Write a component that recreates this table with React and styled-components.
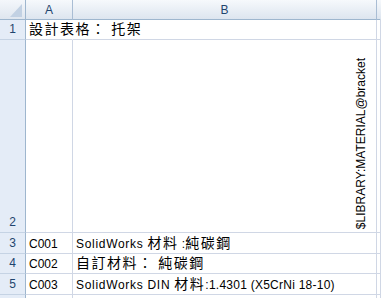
import React from "react";
import styled, { createGlobalStyle } from "styled-components";

const GlobalStyle = createGlobalStyle`
  html, body {
    margin: 0;
    padding: 0;
    background: #ffffff;
    overflow: hidden;
  }
`;

const Sheet = styled.div`
  width: 381px;
  height: 298px;
  overflow: hidden;
  display: grid;
  grid-template-columns: 26px 47px 304px 1fr;
  grid-template-rows: 20px 20px 193px 21px 20px 21px 1fr;
  font-family: "Liberation Sans", Arial, sans-serif;
  font-size: 12px;
  color: #000;
  background: #fff;
`;

const Corner = styled.div`
  position: relative;
  box-sizing: border-box;
  background: linear-gradient(#f4f7fb, #dfe6ef);
  border-right: 1px solid #9eb6ce;
  border-bottom: 1px solid #9eb6ce;

  &::after {
    content: "";
    position: absolute;
    right: 3px;
    bottom: 2px;
    width: 12px;
    height: 13px;
    background: #c2d1e3;
    clip-path: polygon(100% 0, 100% 100%, 0 100%);
  }
`;

const ColHead = styled.div`
  box-sizing: border-box;
  display: flex;
  align-items: center;
  justify-content: center;
  background: linear-gradient(#f6f9fc, #dde5ef);
  border-right: 1px solid ${(p) => (p.$last ? "transparent" : "#a9bdd4")};
  border-bottom: 1px solid #9eb6ce;
  color: #1f456e;
  font-size: 12px;
  padding-top: 1px;
`;

const RowHead = styled.div`
  box-sizing: border-box;
  display: flex;
  align-items: flex-end;
  justify-content: center;
  padding-bottom: 3px;
  background: #e4ecf7;
  border-right: 1px solid #9eb6ce;
  border-bottom: 1px solid #c5d3e4;
  color: #1f456e;
  font-size: 12px;
  line-height: 14px;
`;

const Cell = styled.div`
  position: relative;
  z-index: ${(p) => (p.$spill ? 1 : 0)};
  box-sizing: border-box;
  min-height: 0;
  display: flex;
  align-items: flex-end;
  justify-content: ${(p) => (p.$right ? "flex-end" : "flex-start")};
  padding: ${(p) => (p.$right ? "0 8px 3px 0" : "0 0 1px 3px")};
  border-right: 1px solid ${(p) => (p.$spill ? "transparent" : "#d0d7e5")};
  border-bottom: 1px solid #d0d7e5;
  line-height: 15px;
  white-space: nowrap;
  overflow: visible;
`;

const Value = styled.span`
  display: block;
  white-space: pre;
  line-height: 15px;
`;

const Latin = styled.span`
  letter-spacing: ${(p) => p.$spacing || 0}px;
`;

const Han = styled.span`
  font-family: "Noto Sans CJK TC", "Noto Sans CJK SC", sans-serif;
  font-size: 14px;
  line-height: 15px;
  letter-spacing: 1.5px;
`;

const Rotated = styled.span`
  writing-mode: vertical-rl;
  transform: rotate(180deg);
  line-height: 14px;
`;

export default function App() {
  return (
    <>
      <GlobalStyle />
      <Sheet>
        <Corner />
        <ColHead>A</ColHead>
        <ColHead>B</ColHead>
        <ColHead $last />

        <RowHead>1</RowHead>
        <Cell $spill>
          <Value>
            <Han>設計表格： 托架</Han>
          </Value>
        </Cell>
        <Cell />
        <Cell />

        <RowHead>2</RowHead>
        <Cell />
        <Cell $right>
          <Rotated>$LIBRARY:MATERIAL@bracket</Rotated>
        </Cell>
        <Cell />

        <RowHead>3</RowHead>
        <Cell>
          <Value>C001</Value>
        </Cell>
        <Cell>
          <Value>
            <Latin $spacing={0.7}>SolidWorks </Latin>
            <Han>材料</Han>
            <Latin> :</Latin>
            <Han>純碳鋼</Han>
          </Value>
        </Cell>
        <Cell />

        <RowHead>4</RowHead>
        <Cell>
          <Value>C002</Value>
        </Cell>
        <Cell>
          <Value>
            <Han>自訂材料： 純碳鋼</Han>
          </Value>
        </Cell>
        <Cell />

        <RowHead>5</RowHead>
        <Cell>
          <Value>C003</Value>
        </Cell>
        <Cell>
          <Value>
            <Latin $spacing={0.7}>SolidWorks DIN </Latin>
            <Han>材料</Han>
            <Latin $spacing={0.25}>:1.4301 (X5CrNi 18-10)</Latin>
          </Value>
        </Cell>
        <Cell />

        <RowHead />
        <Cell />
        <Cell />
        <Cell />
      </Sheet>
    </>
  );
}
